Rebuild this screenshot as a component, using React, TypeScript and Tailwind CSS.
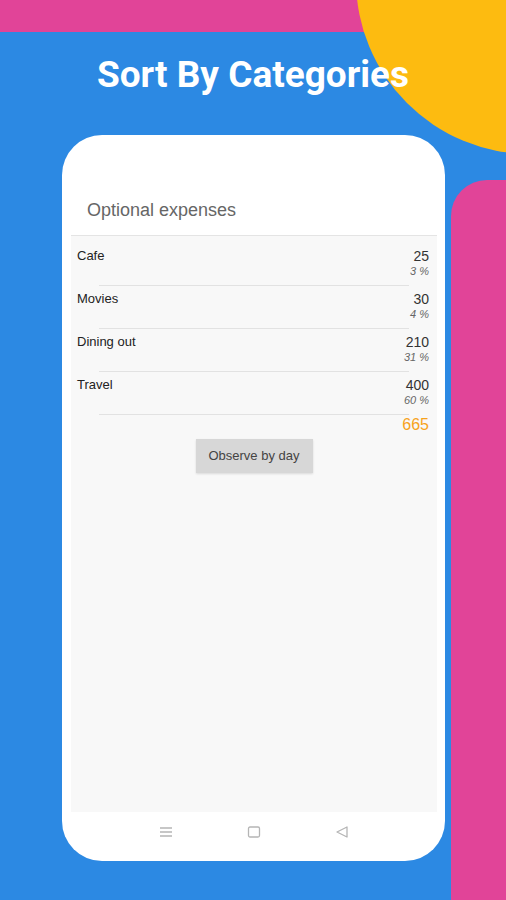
import React from 'react';

const rows = [
  { name: 'Cafe', amount: 25, pct: 3 },
  { name: 'Movies', amount: 30, pct: 4 },
  { name: 'Dining out', amount: 210, pct: 31 },
  { name: 'Travel', amount: 400, pct: 60 },
];

const NavBar = () => (
  <div className="flex h-[49px] items-start justify-center gap-[74px] pt-[14px] text-[#b5b5b5]">
    <svg width="14" height="12" viewBox="0 0 14 12" fill="none" stroke="currentColor" strokeWidth="1.3">
      <path d="M1 2h12M1 6h12M1 10h12" />
    </svg>
    <svg width="14" height="12" viewBox="0 0 14 12" fill="none" stroke="currentColor" strokeWidth="1.3">
      <rect x="1.5" y="1" width="11" height="10" rx="1.5" />
    </svg>
    <svg width="14" height="12" viewBox="0 0 14 12" fill="none" stroke="currentColor" strokeWidth="1.3" strokeLinejoin="round">
      <path d="M12 1L2 6l10 5z" />
    </svg>
  </div>
);

export default function App() {
  return (
    <div className="relative h-[900px] w-[506px] overflow-hidden bg-[#2c89e3]">
      {/* background shapes */}
      <div className="absolute left-0 top-0 h-[32px] w-full bg-[#e14498]" />
      <div className="absolute left-[356px] top-[-194px] h-[348px] w-[348px] rounded-full bg-[#fdbb10]" />
      <div className="absolute left-[451px] top-[180px] h-[760px] w-[80px] rounded-tl-[36px] bg-[#e14498]" />

      <div className="relative flex flex-col">
        <h1 className="mt-[54px] h-[42px] text-center font-['Roboto',sans-serif] text-[37px] font-bold leading-[42px] text-white">
          Sort By Categories
        </h1>

        <div className="ml-[62px] mt-[39px] flex h-[726px] w-[383px] flex-col overflow-hidden rounded-[40px] bg-white font-['Liberation_Sans',Arial,sans-serif]">
          <div className="h-[100px] pl-[25px] pt-[63px] text-[18px] leading-[24px] text-[#666]">
            Optional expenses
          </div>

          <div className="ml-[9px] mr-[8px] flex h-[577px] flex-col border-t border-[#e4e4e4] bg-[#f8f8f8] pt-[7px]">
            {rows.map((r) => (
              <div key={r.name}>
                <div className="pl-[6px] pr-[8px] pt-[5px] pb-[7px]">
                  <div className="flex h-[16px] items-center justify-between">
                    <span className="text-[13px] leading-[16px] text-[#222]">{r.name}</span>
                    <span className="text-[14px] leading-[16px] text-[#333]">{r.amount}</span>
                  </div>
                  <div className="h-[14px] text-right text-[11px] italic leading-[14px] text-[#666]">{r.pct} %</div>
                </div>
                <div className="mx-[28px] h-px bg-[#e2e2e2]" />
              </div>
            ))}
            <div className="h-[20px] pr-[8px] text-right text-[16px] leading-[20px] text-[#f7a21b]">665</div>
            <div className="mt-[4px] flex justify-center">
              <button className="h-[34px] w-[117px] bg-[#d7d7d7] text-[13px] text-[#444] shadow-[0_1px_2px_rgba(0,0,0,0.12)]">
                Observe by day
              </button>
            </div>
          </div>

          <NavBar />
        </div>
      </div>
    </div>
  );
}
